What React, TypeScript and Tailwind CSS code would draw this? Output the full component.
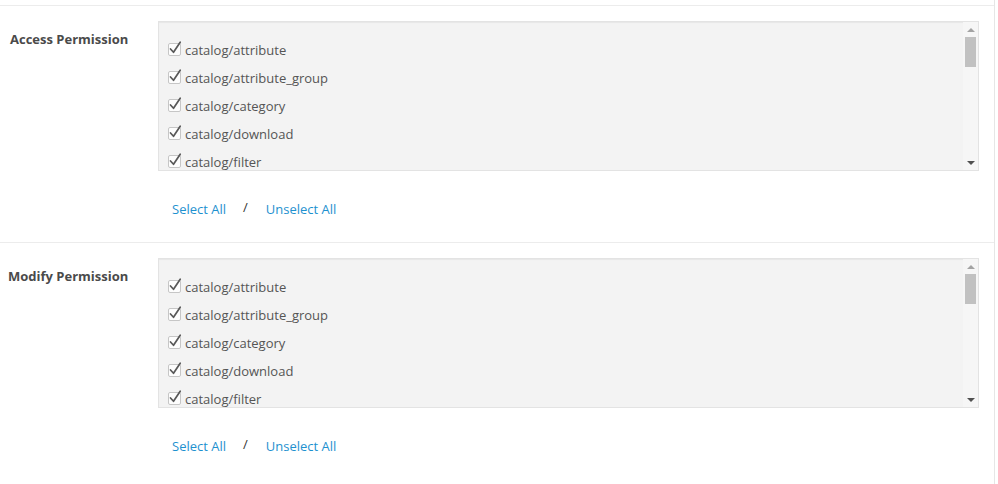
import React from "react";

const items = [
  "catalog/attribute",
  "catalog/attribute_group",
  "catalog/category",
  "catalog/download",
  "catalog/filter",
  "catalog/information",
];

function Check() {
  return (
    <svg width="14" height="16" viewBox="0 0 14 16" className="shrink-0">
      <rect x="0.5" y="3.5" width="12" height="12" rx="1.5" fill="#fdfdfd" stroke="#c6c6c6" />
      <path d="M2.5 9 L5.5 12.3 L12.2 2.2" fill="none" stroke="#585858" strokeWidth="1.7" strokeLinecap="round" strokeLinejoin="round" />
    </svg>
  );
}

function Panel() {
  return (
    <div className="h-[150px] border border-[#e3e3e3] bg-[#f3f3f3] flex shadow-[inset_0_1px_1px_rgba(0,0,0,0.05)]">
      <div className="flex-1 overflow-hidden pl-[9px] pt-[14px]">
        {items.map((t) => (
          <div key={t} className="h-[28px] flex items-center">
            <div className="-mt-[4px]">
              <Check />
            </div>
            <span className="ml-[3px] text-[#555555] leading-[20px]">{t}</span>
          </div>
        ))}
      </div>
      <div className="w-[15px] bg-[#f6f6f6] flex flex-col">
        <div className="h-[15px] flex items-center justify-center">
          <div className="w-0 h-0 border-l-[4px] border-r-[4px] border-b-[4px] border-l-transparent border-r-transparent border-b-[#a3a3a3]" />
        </div>
        <div className="ml-[2px] w-[11px] h-[30px] bg-[#c1c1c1]" />
        <div className="flex-1" />
        <div className="h-[15px] flex items-center justify-center">
          <div className="w-0 h-0 border-l-[4px] border-r-[4px] border-t-[4px] border-l-transparent border-r-transparent border-t-[#505050]" />
        </div>
      </div>
    </div>
  );
}

function Section({ label, labelPad }: { label: string; labelPad: string }) {
  return (
    <div className="flex border-t border-[#ececec] pt-[15px] pb-[23px] pr-[15px]">
      <div className={`w-[158px] shrink-0 pt-[8px] leading-[20px] font-bold text-[#4a4a4a] ${labelPad}`}>
        {label}
      </div>
      <div className="flex-1">
        <Panel />
        <div className="mt-[26px] h-[22px] leading-[20px] pl-[14px] whitespace-nowrap text-[#333]">
          <span className="text-[#1e91cf]">Select All</span>
          <span className="ml-[17px] mr-[18px] align-[2px]">/</span>
          <span className="text-[#1e91cf]">Unselect All</span>
        </div>
      </div>
    </div>
  );
}

export default function App() {
  return (
    <div className="w-[998px] h-[484px] bg-white font-['Open_Sans',sans-serif] text-[13px] overflow-hidden">
      <div className="w-[995px] h-full border-r border-[#e6e6e6]">
        <div className="h-[5px]" />
        <Section label="Access Permission" labelPad="pl-[10px]" />
        <Section label="Modify Permission" labelPad="pl-[8px]" />
      </div>
    </div>
  );
}
